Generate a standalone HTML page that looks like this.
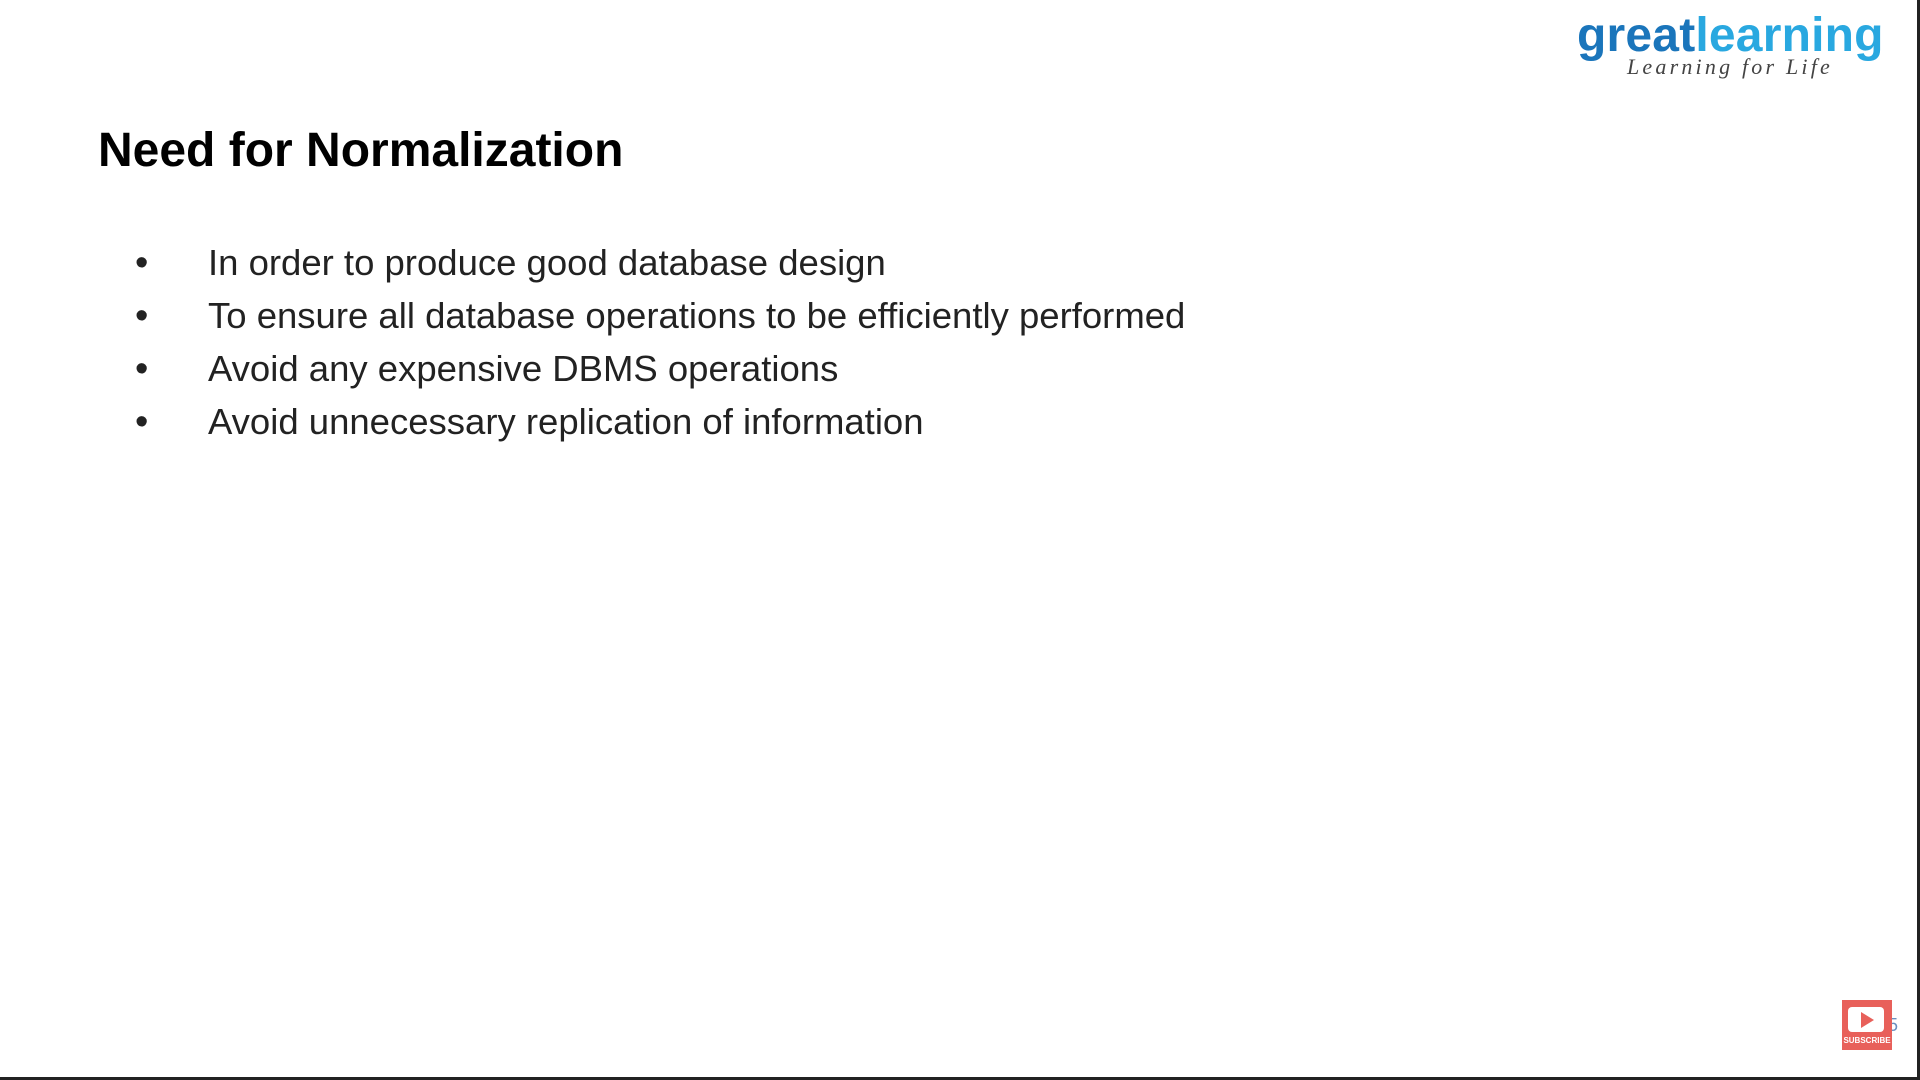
<!DOCTYPE html>
<html><head><meta charset="utf-8"><style>
html,body{margin:0;padding:0;background:#fff;}
body{width:1920px;height:1080px;position:relative;overflow:hidden;font-family:"Liberation Sans",sans-serif;}
.logo{position:absolute;left:1577px;top:12px;font-weight:bold;font-size:48px;letter-spacing:0.2px;line-height:1;}
.logo .g{color:#1a75bb}.logo .l{color:#29a8e0}
.tag{position:absolute;left:1627px;top:54px;font-family:"Liberation Serif",serif;font-style:italic;font-size:22px;letter-spacing:3.2px;color:#444;}
h1{position:absolute;left:98px;top:123px;margin:0;font-size:48px;font-weight:bold;color:#000;}
ul{position:absolute;left:0;top:238px;margin:0;padding:0;list-style:none;}
li{position:relative;height:53px;line-height:50px;font-size:36.5px;color:#222;padding-left:208px;white-space:nowrap;}
li:before{content:"•";position:absolute;left:135px;font-size:38px;}
.vr{position:absolute;right:0;top:0;width:3px;height:1080px;background:#222;}
.hr{position:absolute;left:0;bottom:0;width:1920px;height:3px;background:#222;}
.sub{position:absolute;left:1842px;top:1000px;width:50px;height:50px;background:#e8605a;}
.sub .box{position:absolute;left:6px;top:7px;width:36px;height:25px;background:#fff;border-radius:4px;}
.sub .tri{position:absolute;left:19px;top:12px;width:0;height:0;border-left:13px solid #e8605a;border-top:8px solid transparent;border-bottom:8px solid transparent;}
.sub .t{position:absolute;left:0;top:36px;width:50px;text-align:center;color:#fff;font-size:8px;font-weight:bold;}
.num{position:absolute;left:1878px;top:1015px;color:#6a8fc0;font-size:18px;}
</style></head><body>
<div class="logo"><span class="g">great</span><span class="l">learning</span></div>
<div class="tag">Learning for Life</div>
<h1>Need for Normalization</h1>
<ul>
<li>In order to produce good database design</li>
<li>To ensure all database operations to be efficiently performed</li>
<li>Avoid any expensive DBMS operations</li>
<li>Avoid unnecessary replication of information</li>
</ul>
<div class="num">15</div>
<div class="sub"><div class="box"></div><div class="tri"></div><div class="t">SUBSCRIBE</div></div>
<div class="vr"></div><div class="hr"></div>
</body></html>
